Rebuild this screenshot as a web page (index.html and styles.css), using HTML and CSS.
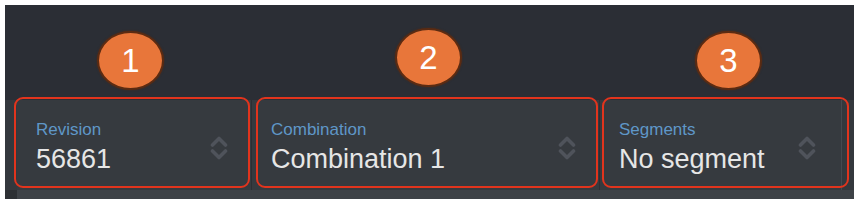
FILE: index.html
```html
<!DOCTYPE html>
<html lang="en">
<head>
    <meta charset="UTF-8">
    <meta name="viewport" content="width=device-width, initial-scale=1.0">
    <title>Selectors</title>
    <link rel="stylesheet" href="styles.css">
</head>
<body>
    <div class="frame">
        <div class="top"></div>

        <div class="bar">
            <div class="stub"></div>
            <div class="cell cell-1">
                <div class="text">
                    <div class="label">Revision</div>
                    <div class="value">56861</div>
                </div>
                <svg class="chevrons" viewBox="0 0 18 28" width="18" height="28">
                    <polyline points="2.5,11 9,4.5 15.5,11"/>
                    <polyline points="2.5,17 9,23.5 15.5,17"/>
                </svg>
            </div>
            <div class="cell cell-2">
                <div class="text">
                    <div class="label">Combination</div>
                    <div class="value">Combination 1</div>
                </div>
                <svg class="chevrons" viewBox="0 0 18 28" width="18" height="28">
                    <polyline points="2.5,11 9,4.5 15.5,11"/>
                    <polyline points="2.5,17 9,23.5 15.5,17"/>
                </svg>
            </div>
            <div class="cell cell-3">
                <div class="text">
                    <div class="label">Segments</div>
                    <div class="value">No segment</div>
                </div>
                <svg class="chevrons" viewBox="0 0 18 28" width="18" height="28">
                    <polyline points="2.5,11 9,4.5 15.5,11"/>
                    <polyline points="2.5,17 9,23.5 15.5,17"/>
                </svg>
            </div>
            <div class="stub stub-right"></div>
        </div>
        <div class="strip">
            <div class="strip-stub"></div>
        </div>

        <!-- annotations -->
        <div class="badge badge-1">1</div>
        <div class="badge badge-2">2</div>
        <div class="badge badge-3">3</div>
        <div class="outline outline-1"></div>
        <div class="outline outline-2"></div>
        <div class="outline outline-3"></div>
    </div>
</body>
</html>
```

FILE: styles.css
```css
body {
    margin: 0;
    padding: 0;
    background-color: #ffffff;
    font-family: "Liberation Sans", Arial, sans-serif;
}

.frame {
    position: relative;
    margin: 5px 0 0 5px;
    width: 849px;
    height: 194px;
    background-color: #2b2e35;
    display: flex;
    flex-direction: column;
}

.top {
    height: 95px;
}

.bar {
    height: 90px;
    display: flex;
    background-color: #363a3f;
}

.stub {
    width: 12px;
    background-color: #34383d;
}

.stub-right {
    border-left: 1px solid #45494f;
}

.cell {
    display: flex;
    justify-content: space-between;
    align-items: flex-start;
    padding: 0 23px 0 19px;
    border-right: 1px solid #2c2f33;
}

.cell-1 {
    width: 235px;
    box-sizing: border-box;
}

.cell-2 {
    width: 348px;
    box-sizing: border-box;
}

.cell-3 {
    width: 241px;
    box-sizing: border-box;
    border-right: none;
    padding-right: 25px;
}

.text {
    padding-top: 20px;
}

.label {
    font-size: 17px;
    line-height: 20px;
    color: #5f97c8;
}

.value {
    margin-top: 4px;
    font-size: 27px;
    line-height: 30px;
    color: #e6e6e6;
    white-space: nowrap;
}

.chevrons {
    margin-top: 34px;
    fill: none;
    stroke: #4f535b;
    stroke-width: 3.6;
    stroke-linecap: round;
    stroke-linejoin: round;
}

.strip {
    flex: 1;
    display: flex;
    background-color: #3e4247;
}

.strip-stub {
    width: 12px;
    background-color: #2d3034;
}

/* annotations */
.badge {
    position: absolute;
    top: 26px;
    width: 63px;
    height: 55px;
    border-radius: 50%;
    background-color: #e8763a;
    border: 2px solid #5b2b12;
    box-shadow: 0 0 2px rgba(90, 40, 15, 0.8);
    color: #ffffff;
    font-size: 33px;
    line-height: 55px;
    text-align: center;
}

.badge-1 {
    left: 92px;
}

.badge-2 {
    left: 390px;
    top: 23px;
}

.badge-3 {
    left: 690px;
}

.outline {
    position: absolute;
    top: 92px;
    height: 87px;
    border: 2px solid #e2341d;
    border-radius: 9px;
}

.outline-1 {
    left: 9px;
    width: 232px;
}

.outline-2 {
    left: 251px;
    width: 338px;
}

.outline-3 {
    left: 597px;
    width: 243px;
}
```
